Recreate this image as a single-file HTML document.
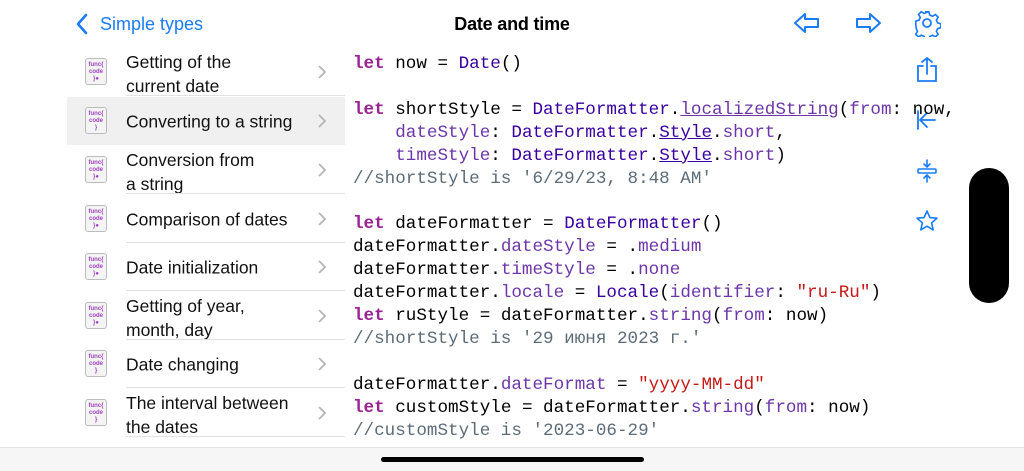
<!DOCTYPE html>
<html><head><meta charset="utf-8"><style>
*{margin:0;padding:0;box-sizing:border-box}
body{width:1024px;height:471px;overflow:hidden;background:#fff;font-family:"Liberation Sans",sans-serif;position:relative}
.abs{position:absolute}
.title{left:0;width:1024px;top:14px;text-align:center;font-size:18px;font-weight:bold;color:#000;letter-spacing:-0.2px}
.back{left:100px;top:14px;font-size:18px;color:#1a7cf5}
.row{position:absolute;left:67px;width:278px;height:48px}
.row.sel{background:#f0f0f0}
.row .t{position:absolute;left:59px;font-size:17.5px;color:#111;line-height:23.5px;top:50%;transform:translateY(-45%)}
.row .sep{position:absolute;left:59px;right:0;bottom:0;height:1px;background:#e2e2e2}
.row .chev{position:absolute;left:250px;top:17px}
.ic{position:absolute;left:18px;top:10px;width:22px;height:27px;border:1px solid #bbb;border-radius:3px;background:#f4f4f4;font-size:6px;line-height:7px;color:#a040c0;text-align:center;padding-top:3px;font-weight:bold}
pre{position:absolute;left:353px;top:53px;font-family:"Liberation Mono",monospace;font-size:17.6px;line-height:22.9px;color:#000}
.k{color:#9b2393;font-weight:bold}.ty{color:#3900a0}.p{color:#6c36a9}.c{color:#5d6c79}.s{color:#c41a16}.u{text-decoration:underline}
</style></head><body>
<svg class="abs" style="left:74px;top:12px" width="16" height="24" viewBox="0 0 16 24"><path d="M12 3 L4 12 L12 21" fill="none" stroke="#1a7cf5" stroke-width="2.6" stroke-linecap="round" stroke-linejoin="round"/></svg>
<div class="abs back">Simple types</div>
<div class="abs title">Date and time</div>
<svg class="abs" style="left:792px;top:10px" width="30" height="26" viewBox="0 0 30 26"><path d="M3 13 L13 4 V9 H26 V17 H13 V22 Z" fill="none" stroke="#1a7cf5" stroke-width="2" stroke-linejoin="round"/></svg>
<svg class="abs" style="left:853px;top:10px" width="30" height="26" viewBox="0 0 30 26"><path d="M27 13 L17 4 V9 H4 V17 H17 V22 Z" fill="none" stroke="#1a7cf5" stroke-width="2" stroke-linejoin="round"/></svg>
<svg class="abs" style="left:913px;top:9px" width="28" height="28" viewBox="0 0 28 28"><g fill="none" stroke="#1a7cf5" stroke-width="1.8"><circle cx="14" cy="14" r="4"/><path d="M12 2h4l1 3.5 3 1.3 3.2-1.8 2.8 2.8-1.8 3.2 1.3 3 3.5 1v4l-3.5 1-1.3 3 1.8 3.2-2.8 2.8-3.2-1.8-3 1.3-1 3.5h-4l-1-3.5-3-1.3-3.2 1.8-2.8-2.8 1.8-3.2-1.3-3L2 16v-4l3.5-1 1.3-3-1.8-3.2 2.8-2.8 3.2 1.8 3-1.3z" transform="scale(0.93) translate(1 1)"/></g></svg>
<svg class="abs" style="left:915px;top:56px" width="24" height="28" viewBox="0 0 24 28"><g fill="none" stroke="#1a7cf5" stroke-width="1.8" stroke-linecap="round"><path d="M8 10H3v15h18V10h-5"/><path d="M12 18V2M7 6l5-4 5 4"/></g></svg>
<svg class="abs" style="left:915px;top:108px" width="24" height="24" viewBox="0 0 24 24"><g fill="none" stroke="#1a7cf5" stroke-width="1.8" stroke-linecap="round"><path d="M3 3v18M20 12H5M12 5l-7 7 7 7"/></g></svg>
<svg class="abs" style="left:915px;top:158px" width="24" height="26" viewBox="0 0 24 26"><g fill="none" stroke="#1a7cf5" stroke-width="1.6" stroke-linecap="round"><rect x="3" y="11" width="18" height="4" rx="1"/><path d="M12 2v7M9 6l3 3 3-3M12 17v7M9 20l3-3 3 3"/></g></svg>
<svg class="abs" style="left:915px;top:209px" width="24" height="24" viewBox="0 0 24 24"><path d="M12 2l2.9 6.6 7.1.6-5.4 4.7 1.6 7L12 17.2 5.8 20.9l1.6-7L2 9.2l7.1-.6z" fill="none" stroke="#1a7cf5" stroke-width="1.6" stroke-linejoin="round"/></svg>
<div class="abs" style="left:969px;top:168px;width:40px;height:135px;border-radius:20px;background:#000"></div>

<div class="row" style="top:48px"><div class="ic">func{<br>code<br>}●</div><div class="t">Getting of the<br>current date</div><svg class="chev" width="10" height="14"><path d="M2 1l6 6-6 6" fill="none" stroke="#b5b5b5" stroke-width="1.8"/></svg><div class="sep"></div></div>
<div class="row sel" style="top:97px"><div class="ic">func{<br>code<br>}</div><div class="t">Converting to a string</div><svg class="chev" width="10" height="14"><path d="M2 1l6 6-6 6" fill="none" stroke="#b5b5b5" stroke-width="1.8"/></svg></div>
<div class="row" style="top:146px"><div class="ic">func{<br>code<br>}●</div><div class="t">Conversion from<br>a string</div><svg class="chev" width="10" height="14"><path d="M2 1l6 6-6 6" fill="none" stroke="#b5b5b5" stroke-width="1.8"/></svg><div class="sep"></div></div>
<div class="row" style="top:195px"><div class="ic">func{<br>code<br>}●</div><div class="t">Comparison of dates</div><svg class="chev" width="10" height="14"><path d="M2 1l6 6-6 6" fill="none" stroke="#b5b5b5" stroke-width="1.8"/></svg><div class="sep"></div></div>
<div class="row" style="top:243px"><div class="ic">func{<br>code<br>}●</div><div class="t">Date initialization</div><svg class="chev" width="10" height="14"><path d="M2 1l6 6-6 6" fill="none" stroke="#b5b5b5" stroke-width="1.8"/></svg><div class="sep"></div></div>
<div class="row" style="top:292px"><div class="ic">func{<br>code<br>}●</div><div class="t">Getting of year,<br>month, day</div><svg class="chev" width="10" height="14"><path d="M2 1l6 6-6 6" fill="none" stroke="#b5b5b5" stroke-width="1.8"/></svg><div class="sep"></div></div>
<div class="row" style="top:340px"><div class="ic">func{<br>code<br>}</div><div class="t">Date changing</div><svg class="chev" width="10" height="14"><path d="M2 1l6 6-6 6" fill="none" stroke="#b5b5b5" stroke-width="1.8"/></svg><div class="sep"></div></div>
<div class="row" style="top:389px"><div class="ic">func{<br>code<br>}</div><div class="t">The interval between<br>the dates</div><svg class="chev" width="10" height="14"><path d="M2 1l6 6-6 6" fill="none" stroke="#b5b5b5" stroke-width="1.8"/></svg><div class="sep"></div></div>

<pre><span class="k">let</span> now = <span class="ty">Date</span>()

<span class="k">let</span> shortStyle = <span class="ty">DateFormatter</span>.<span class="p u">localizedString</span>(<span class="p">from</span>: now,
    <span class="p">dateStyle</span>: <span class="ty">DateFormatter</span>.<span class="ty u">Style</span>.<span class="p">short</span>,
    <span class="p">timeStyle</span>: <span class="ty">DateFormatter</span>.<span class="ty u">Style</span>.<span class="p">short</span>)
<span class="c">//shortStyle is '6/29/23, 8:48 AM'</span>

<span class="k">let</span> dateFormatter = <span class="ty">DateFormatter</span>()
dateFormatter.<span class="p">dateStyle</span> = .<span class="p">medium</span>
dateFormatter.<span class="p">timeStyle</span> = .<span class="p">none</span>
dateFormatter.<span class="p">locale</span> = <span class="ty">Locale</span>(<span class="p">identifier</span>: <span class="s">"ru-Ru"</span>)
<span class="k">let</span> ruStyle = dateFormatter.<span class="p">string</span>(<span class="p">from</span>: now)
<span class="c">//shortStyle is '29 июня 2023 г.'</span>

dateFormatter.<span class="p">dateFormat</span> = <span class="s">"yyyy-MM-dd"</span>
<span class="k">let</span> customStyle = dateFormatter.<span class="p">string</span>(<span class="p">from</span>: now)
<span class="c">//customStyle is '2023-06-29'</span></pre>

<div class="abs" style="left:0;top:447px;width:1024px;height:24px;background:#f6f6f6;border-top:1px solid #e4e4e4"></div>
<div class="abs" style="left:381px;top:457px;width:263px;height:5px;border-radius:3px;background:#000"></div>
</body></html>
